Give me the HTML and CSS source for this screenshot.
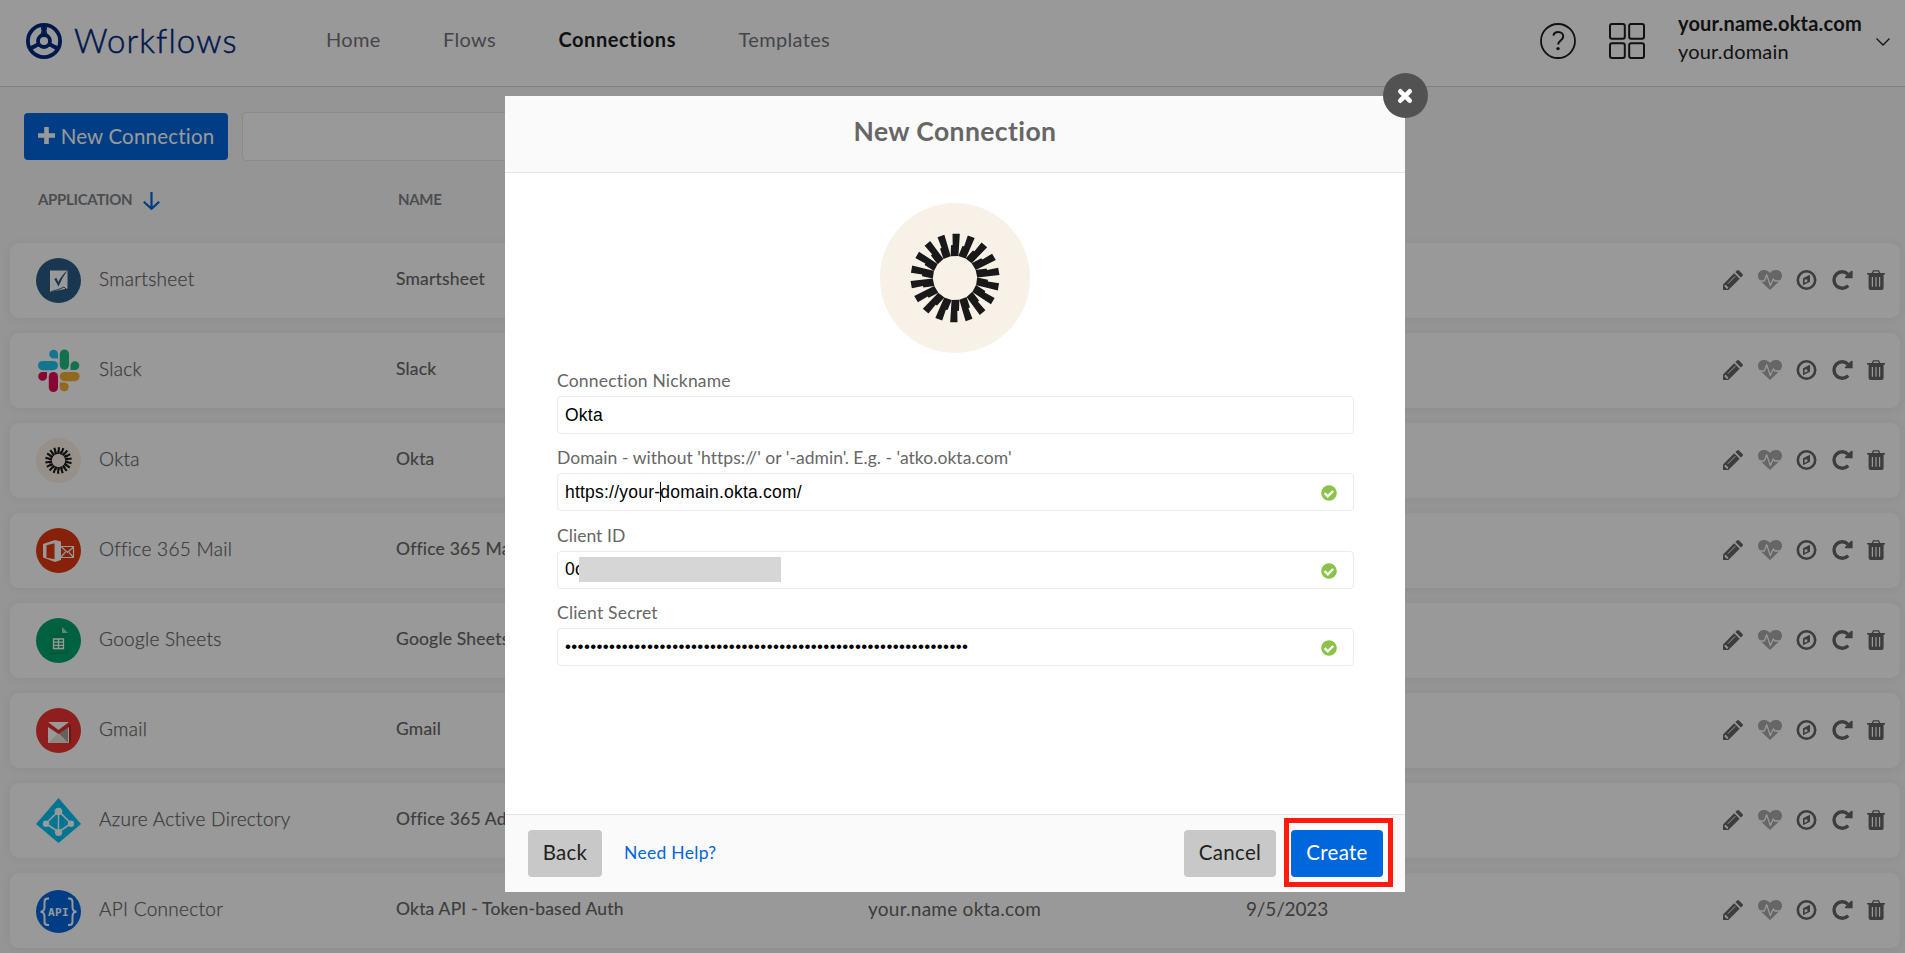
FILE: index.html
```html
<!DOCTYPE html>
<html lang="en">
<head>
<meta charset="utf-8">
<title>Workflows - Connections</title>
<link rel="stylesheet" href="styles.css">
</head>
<body>
<svg class="defs" width="0" height="0">
  <symbol id="sunburst" viewBox="-75 -75 150 150">
    <circle r="75" fill="#f8f1e7"/>
    <g id="rays" fill="#191919"></g>
  </symbol>
  <symbol id="pencil" viewBox="0 0 20 20">
    <path d="M0 20v-5.4L11.2 3.2l5.5 5.5L5.4 20z"/>
    <path d="M12.4 2.1l1.7-1.6q.9-.8 1.9 0l3.5 3.5q.9 1 0 1.9l-1.7 1.7z"/>
    <path d="M4.9 13.7l7.4-7.5" stroke="#fff" stroke-width="1" fill="none"/>
    <path d="M2 14.9l1.5.3.2 1.3 1.3.2.3 1.3-1.2.9-2.7-2.7z" fill="#fff"/>
  </symbol>
  <symbol id="heart" viewBox="0 0 24 20">
    <path d="M12 20L1.900 10.500C-2 5.600.5 0 6 0c3.200 0 5 1.700 6 3 1-1.300 2.800-3 6-3 5.500 0 8 5.600 4.100 10.500z"/>
    <path d="M0 11h6.300l2.400-6.300 3.600 10.800 3-6.600 1.600 2.100H24" fill="none" stroke="#fff" stroke-width="1.300" stroke-linejoin="round"/>
  </symbol>
  <symbol id="compass" viewBox="0 0 21 20">
    <circle cx="10.500" cy="10" r="8.700" fill="none" stroke="currentColor" stroke-width="2.600"/>
    <path d="M14 4.800v7L7 15.300v-7z"/>
    <path d="M8.600 9.400v3.400l2.800-1.400v-2z" fill="#fff"/>
  </symbol>
  <symbol id="redo" viewBox="0 0 21 20">
    <path d="M16.200 15.600A8.200 8.200 0 1 1 16 4.200" fill="none" stroke="currentColor" stroke-width="3.400"/>
    <path d="M20.600 1v7.300H13.200L12.800 7.200 19.200.8z"/>
  </symbol>
  <symbol id="trash" viewBox="0 0 18 20">
    <path d="M5.200 3.500L6.400.9h5.200l1.200 2.600" fill="none" stroke="currentColor" stroke-width="1.300"/>
    <path d="M0 3h18v1.500h-1.400V18q0 2-2 2H3.600q-2 0-2-2V4.500H0z"/>
    <path d="M5.400 7v9.800M9 7v9.800M12.600 7v9.800" stroke="#fff" stroke-width="1.200"/>
  </symbol>
  <symbol id="check" viewBox="0 0 16 16">
    <circle cx="8" cy="8" r="7.800" fill="#8bc34a"/>
    <path d="M3.600 8.100l3.200 3.300 5.400-5.400" fill="none" stroke="#fff" stroke-width="2.300"/>
  </symbol>
</svg>

<header class="topbar">
  <div class="brand">
    <svg width="36" height="36" viewBox="-18 -18 36 36" fill="none" stroke="#002b80" stroke-width="3.800">
      <circle r="16.100"/><circle r="6"/>
      <path d="M0-6V-16M5.200 3L14 8M-5.200 3L-14 8"/>
      <path d="M-15 6Q-8 4-6 2M15 6Q8 4 6 2M-3-15Q-1-10-3-6M3-15Q1-10 3-6" stroke-width="1"/>
    </svg>
    <span class="brand-name">Workflows</span>
  </div>
  <nav class="nav">
    <a>Home</a><a>Flows</a><a class="active">Connections</a><a>Templates</a>
  </nav>
  <div class="tools">
    <svg width="36" height="36" viewBox="0 0 36 36" fill="none" stroke="#1d1d21" stroke-width="1.800">
      <circle cx="18" cy="18" r="17"/>
      <path d="M13.300 12.600c.8-2.700 2.800-3.500 4.900-3.500 3 0 5 1.900 5 4.400 0 4.100-5.100 3.900-5.100 8.100" stroke-width="2"/>
      <circle cx="18" cy="25.600" r="1.700" fill="#1d1d21" stroke="none"/>
    </svg>
    <svg width="36" height="36" viewBox="0 0 36 36" fill="none" stroke="#1d1d21" stroke-width="2">
      <rect x="1" y="1" width="14.800" height="14.800" rx="2"/><rect x="20.200" y="1" width="14.800" height="14.800" rx="2"/>
      <rect x="1" y="20.200" width="14.800" height="14.800" rx="2"/><rect x="20.200" y="20.200" width="14.800" height="14.800" rx="2"/>
    </svg>
    <div class="account"><strong>your.name.okta.com</strong><span>your.domain</span></div>
    <svg class="chev" width="14" height="8" viewBox="0 0 14 8" fill="none" stroke="#1d1d21" stroke-width="1.300"><path d="M.5.5L7 7 13.500.5"/></svg>
  </div>
</header>

<main class="page">
  <div class="toolbar">
    <button class="btn-new"><svg width="17" height="17" viewBox="0 0 17 17"><path d="M8.500 0v17M0 8.500h17" stroke="#fff" stroke-width="4.600"/></svg>New Connection</button>
    <div class="search"></div>
  </div>
  <div class="heads">
    <div>APPLICATION <svg width="17" height="18" viewBox="0 0 17 18" fill="none" stroke="#0066dc" stroke-width="2.200"><path d="M8.500 0v16.500M.8 9.800l7.700 7 7.700-7"/></svg></div>
    <div>NAME</div>
  </div>
  <div class="rows" id="rows">
    <div class="row"><div class="app">
      <svg width="45" height="45" viewBox="0 0 45 45"><circle cx="22.500" cy="22.500" r="22.500" fill="#2b5d85"/><path d="M14 12.500h17.500v18L14 34z" fill="#fff"/><path d="M18.300 21l2-1.200 2 4.300Q26 16.500 31.500 12.500 26 19.500 22.500 28.500z" fill="#2b5d85"/><path d="M15 33.600q8-1.800 13-4.600l2.500 2.500" stroke="#2b5d85" fill="none"/></svg>
      <span>Smartsheet</span></div><div class="name">Smartsheet</div></div>
    <div class="row"><div class="app">
      <svg width="45" height="45" viewBox="0 0 45 45">
        <g fill="#1ec5f0"><path d="M22 10.500h-4.500A4.400 4.400 0 1 1 22 6z"/><rect x="2" y="13" width="20" height="9.200" rx="4.600"/></g>
        <g fill="#1fbd82"><path d="M34.500 22v-4.500A4.400 4.400 0 1 1 39 22z"/><rect x="23.800" y="1.500" width="9.200" height="20.200" rx="4.600"/></g>
        <g fill="#f0b035"><path d="M23.800 34.500h4.700a4.400 4.400 0 1 1-4.700 4.500z"/><rect x="23.800" y="24" width="19.800" height="9.200" rx="4.600"/></g>
        <g fill="#e00b57"><path d="M11 24v4.500A4.400 4.400 0 1 1 6.500 24z"/><rect x="12.800" y="24" width="9.200" height="20" rx="4.600"/></g>
      </svg>
      <span>Slack</span></div><div class="name">Slack</div></div>
    <div class="row"><div class="app">
      <svg width="45" height="45"><use href="#sunburst" width="45" height="45"/></svg>
      <span>Okta</span></div><div class="name">Okta</div></div>
    <div class="row"><div class="app">
      <svg width="45" height="45" viewBox="0 0 45 45"><circle cx="22.500" cy="22.500" r="22.500" fill="#e2370f"/><path d="M7 16l12-4 6 1.500v18.500L19 34 7 29.500z" fill="#fff"/><path d="M10.500 17.200l8-2v16l-8-1.500z" fill="#e2370f"/><path d="M25 18.500h12.500v11H25M25.500 19l6 5.500 6-5.500M25 29l4.500-5M37.500 29.500l-4.500-5" fill="none" stroke="#fff" stroke-width="1.200"/></svg>
      <span>Office 365 Mail</span></div><div class="name">Office 365 Mail</div></div>
    <div class="row"><div class="app">
      <svg width="45" height="45" viewBox="0 0 45 45"><circle cx="22.500" cy="22.500" r="22.500" fill="#00a36b"/><path d="M13 9h13l6 6v20.500H13z" fill="#009f67"/><path d="M13 35.500h19" stroke="#008f5b"/><path d="M26 9l6 6h-6z" fill="#a5e0c8"/><path d="M17.500 21h10v9.500h-10zM22.500 21v9.500M17.500 24.200h10M17.500 27.300h10" fill="none" stroke="#fff" stroke-width="1.300"/></svg>
      <span>Google Sheets</span></div><div class="name">Google Sheets</div></div>
    <div class="row"><div class="app">
      <svg width="45" height="45" viewBox="0 0 45 45"><circle cx="22.500" cy="22.500" r="22.500" fill="#ee3535"/><path d="M32 15l3 3v17h-3z" fill="#b82020"/><path d="M12 14h21v21H12z" fill="#fff"/><path d="M32 16v19L22 25z" fill="#a3a3a0"/><path d="M12 35l10.500-10L32 35z" fill="#e8e4d6"/><path d="M12 14v5l10.500 7L33 19v-5l-10.500 8z" fill="#e62f2f"/></svg>
      <span>Gmail</span></div><div class="name">Gmail</div></div>
    <div class="row"><div class="app">
      <svg width="45" height="45" viewBox="0 0 45 45"><path d="M22.500 0L45 26 22.500 45 0 26z" fill="#00c3f5"/><path d="M22.500 13L10 25.500l12.500 8.500L35 25.500z" fill="none" stroke="#fff" stroke-width="1.700"/><path d="M22.500 13v21" stroke="#fff" stroke-width="1.500"/><g fill="#fff"><circle cx="22.500" cy="13.500" r="3.800"/><circle cx="10" cy="25.700" r="3.200"/><circle cx="35" cy="25.700" r="3.200"/><circle cx="22.500" cy="34.500" r="3.600"/></g></svg>
      <span>Azure Active Directory</span></div><div class="name">Office 365 Admin</div></div>
    <div class="row"><div class="app">
      <svg width="45" height="45" viewBox="0 0 45 45"><ellipse cx="22.500" cy="23.500" rx="22.500" ry="21.500" fill="#0066dc"/><path d="M13 10.500h-1.500Q8.500 10.500 8.500 14v5q0 4.500-4 4.800 4 .3 4 4.800v5q0 3.500 3 3.500H13M32 10.500h1.500q3 0 3 3.500v5q0 4.500 4 4.800-4 .3-4 4.800v5q0 3.500-3 3.500H32" fill="none" stroke="#fff" stroke-width="2"/><text x="22.500" y="27.500" class="api" text-anchor="middle">API</text></svg>
      <span>API Connector</span></div><div class="name">Okta API - Token-based Auth</div><div class="owner">your.name okta.com</div><div class="date">9/5/2023</div></div>
  </div>
</main>

<div class="backdrop">
  <section class="modal">
    <button class="close"><svg width="16" height="16" viewBox="0 0 16 16"><path d="M3.300 3.300l9.400 9.400M12.700 3.300l-9.400 9.400" stroke="#fff" stroke-width="4.600" stroke-linecap="round"/></svg></button>
    <h2 class="modal-head">New Connection</h2>
    <div class="modal-body">
      <svg class="modal-logo" width="150" height="150"><use href="#sunburst" width="150" height="150"/></svg>
      <div class="field"><label>Connection Nickname</label><div class="input">Okta</div></div>
      <div class="field"><label class="long">Domain - without 'https://' or '-admin'. E.g. - 'atko.okta.com'</label><div class="input"><span>https://your-<i class="caret"></i>domain.okta.com/</span><svg class="ok" width="16" height="16"><use href="#check"/></svg></div></div>
      <div class="field"><label class="long">Client ID</label><div class="input"><span>0o<i class="redacted"></i></span><svg class="ok" width="16" height="16"><use href="#check"/></svg></div></div>
      <div class="field"><label>Client Secret</label><div class="input"><span class="dots">••••••••••••••••••••••••••••••••••••••••••••••••••••••••••••••••</span><svg class="ok" width="16" height="16"><use href="#check"/></svg></div></div>
    </div>
    <footer class="modal-foot">
      <button class="btn back">Back</button>
      <a class="help">Need Help?</a>
      <button class="btn cancel">Cancel</button>
      <button class="btn create">Create<i class="mark"></i></button>
    </footer>
  </section>
</div>
<script src="app.js"></script>
</body>
</html>
```

FILE: styles.css
```css
* { box-sizing: border-box; }
body { margin: 0; height: 953px; overflow: hidden; background: #f8f8f8; font-family: Lato, "Open Sans", sans-serif; color: #666; }
button { font: inherit; border: 0; padding: 0; }
.defs { position: absolute; }

.topbar { height: 87px; background: #fff; border-bottom: 1px solid #d8d8d8; display: flex; }
.brand { width: 326px; padding: 23px 0 0 26px; display: flex; gap: 12px; }
.brand svg { flex: none; }
.brand-name { font-size: 33px; font-weight: 300; line-height: 35px; color: #002b80; letter-spacing: 1.1px; -webkit-text-stroke: .5px #002b80; }
.nav { flex: 1; display: grid; grid-template-columns: 117px 115.5px 180px auto; font-size: 20px; line-height: 24px; padding-top: 27px; color: #74747b; letter-spacing: .35px; }
.nav .active { color: #1d1d21; font-weight: 700; letter-spacing: .55px; }
.tools { display: flex; padding: 23px 15px 0 0; color: #1d1d21; }
.tools > svg { flex: none; margin-right: 33px; }
.tools > .chev { margin: 15px 0 0; }
.account { width: 198px; display: flex; flex-direction: column; font-size: 20px; line-height: 28px; margin-top: -14px; letter-spacing: .2px; }

.toolbar { display: flex; gap: 14px; padding: 25px 0 0 24px; align-items: center; }
.btn-new { width: 204px; height: 47px; padding-bottom: 2px; border-radius: 4px; background: #0066dc; color: #fff; font-size: 20.5px; letter-spacing: .2px; display: flex; align-items: center; justify-content: center; gap: 6px; }
.btn-new svg { margin-top: -1px; }
.search { width: 600px; height: 49px; background: #fff; border: 1px solid #e8e8e8; border-radius: 4px; }
.heads { display: grid; grid-template-columns: 360px auto; padding: 0 0 0 38px; height: 82px; align-items: center; font-size: 15px; font-weight: 700; letter-spacing: -.3px; color: #7d8489; }
.heads div { display: flex; gap: 11px; align-items: center; height: 20px; margin-top: -6px; }
.heads svg { margin-top: 3px; }
.rows { display: flex; flex-direction: column; gap: 15px; padding: 0 5px 0 10px; }
.row { height: 75px; flex: none; background: #fff; border-radius: 9px; box-shadow: 0 1px 10px rgba(0,0,0,.06); display: grid; grid-template-columns: 386px 472px 378px 120px 1fr; align-items: center; }
.app { padding-left: 26px; display: flex; gap: 18px; align-items: center; font-size: 19px; font-weight: 300; letter-spacing: .3px; }
.app span { margin-top: -5px; -webkit-text-stroke: .25px #666; }
.name { font-size: 17.5px; letter-spacing: .2px; margin-top: -4px; -webkit-text-stroke: .15px #666; }
.owner, .date { font-size: 19px; letter-spacing: .25px; margin-top: -4px; }
.date { letter-spacing: -.15px; }
.acts { grid-column: 5; display: flex; justify-content: flex-end; gap: 14.500px; padding-right: 15px; margin-top: -2px; color: #666; fill: #666; }
.acts .faint { fill: #aaa; }
.api { font: 700 11px "DejaVu Sans Mono", monospace; fill: #fff; }

.backdrop { position: fixed; inset: 0; background: rgba(0,0,0,.4); }
.modal { position: relative; width: 900px; height: 796px; margin: 96px 0 0 505px; background: #fff; display: flex; flex-direction: column; }
.close { position: absolute; right: -23px; top: -23px; width: 45px; height: 45px; padding-right: 1px; border-radius: 50%; background: #525252; display: flex; align-items: center; justify-content: center; }
.modal-head { margin: 0; height: 77px; background: #fafafa; border-bottom: 1px solid #e5e5e5; text-align: center; font-size: 26.5px; letter-spacing: .4px; line-height: 71px; font-weight: 700; color: #666; }
.modal-body { flex: 1; padding: 30px 51px 0 52px; display: flex; flex-direction: column; }
.modal-logo { align-self: center; flex: none; margin: 0 2px 13px 0; }
.field { height: 77.400px; flex: none; }
.field label { display: block; height: 30px; line-height: 30px; font-size: 17.5px; letter-spacing: .2px; color: #666; }
.field .long { letter-spacing: .04px; }
.input { height: 38px; border: 1px solid #ebebeb; border-radius: 4px; padding: 0 16px 0 7px; display: flex; align-items: center; justify-content: space-between; font: 17.5px "Liberation Sans", Arial, sans-serif; letter-spacing: .22px; color: #000; }
.input span { position: relative; }
.ok { margin-top: 2px; }
.caret { position: absolute; width: 1px; height: 20px; background: #000; }
.redacted { position: absolute; left: 14px; top: -2px; width: 202px; height: 25px; background: #d6d6d6; }
.input .dots { font-size: 17px; letter-spacing: .35px; }
.modal-foot { height: 78px; background: #fafafa; border-top: 1px solid #e5e5e5; padding: 15px 22px 0 23px; display: flex; }
.btn { height: 47px; padding-bottom: 3px; border-radius: 4px; background: #c8c8c8; color: #222; font-size: 20.5px; letter-spacing: .3px; line-height: 44px; }
.back { width: 74px; }
.help { flex: 1; padding-left: 22px; font-size: 17.5px; letter-spacing: .3px; line-height: 45px; color: #0066dc; }
.cancel { width: 92px; margin-right: 15px; }
.create { position: relative; width: 92px; background: #0066dc; color: #fff; }
.mark { position: absolute; left: -7px; top: -12px; width: 109px; height: 69px; border: 5px solid #ff1a0d; }
```

FILE: app.js
```js
// 18 stepped rays around the Okta mark
document.getElementById('rays').innerHTML = Array.from({ length: 18 }, (_, i) =>
  `<path transform="rotate(${i * 20})" d="M-2.500-44.300H4.800L4-31 3.400-22-4.400-21.700-4-32.700-2.300-33z"/>`).join('');

// every connection row carries the same action icons
const actions = [['pencil', 20], ['heart', 24], ['compass', 21], ['redo', 21], ['trash', 18]];
document.querySelectorAll('.row').forEach(row => {
  const icons = actions.map(([id, w]) =>
    `<svg class="${id === 'heart' ? 'faint' : ''}" width="${w}" height="20"><use href="#${id}" width="${w}" height="20"/></svg>`).join('');
  row.insertAdjacentHTML('beforeend', `<div class="acts">${icons}</div>`);
});
```
